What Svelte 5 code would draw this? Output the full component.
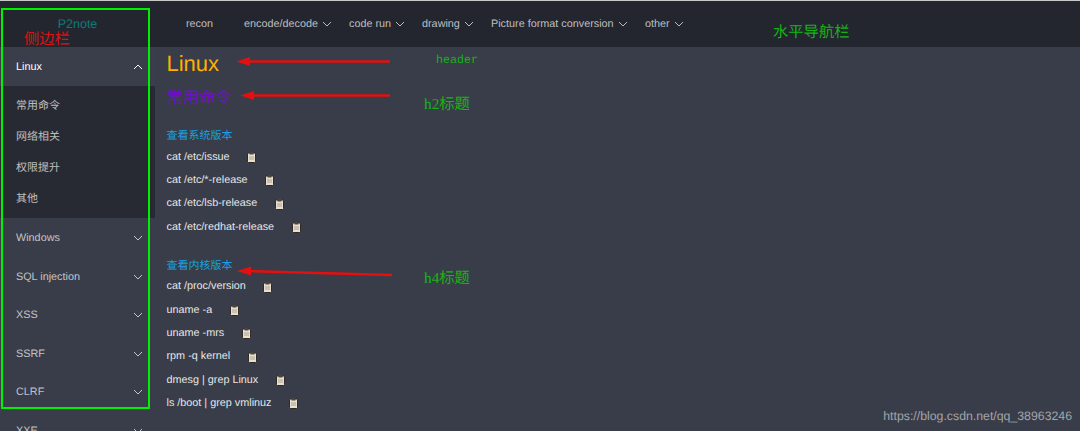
<script>
  const navItems = [
    { name: 'recon', width: 58, arrow: false },
    { name: 'encode/decode', width: 105, arrow: true },
    { name: 'code run', width: 73, arrow: true },
    { name: 'drawing', width: 69, arrow: true },
    { name: 'Picture format conversion', width: 154, arrow: true },
    { name: 'other', width: 60, arrow: true }
  ];
  const subItems = ['常用命令', '网络相关', '权限提升', '其他'];
  const closedItems = ['Windows', 'SQL injection', 'XSS', 'SSRF', 'CLRF', 'XXE'];
  const systemCmds = ['cat /etc/issue', 'cat /etc/*-release', 'cat /etc/lsb-release', 'cat /etc/redhat-release'];
  const kernelCmds = [
    'cat /proc/version',
    'uname -a',
    'uname -mrs',
    'rpm -q kernel',
    'dmesg | grep Linux',
    'ls /boot | grep vmlinuz'
  ];
</script>

{#snippet chevron(up)}
  <svg class="chevron" width="10" height="6" viewBox="0 0 10 6" class:up>
    <path d="M1 1 L5 5 L9 1" fill="none" stroke="currentColor" stroke-width="1" />
  </svg>
{/snippet}

{#snippet clip()}
  <svg class="clip" width="9" height="11" viewBox="0 0 9 11">
    <rect x="0.5" y="1" width="8" height="9.5" rx="1" fill="#e9dfcd" stroke="#2f2a26" />
    <rect x="2.5" y="0" width="4" height="2.5" fill="#4a443c" />
    <path d="M2 5h5M2 7h5" stroke="#a8a398" stroke-width="1" />
  </svg>
{/snippet}

{#snippet cmdList(cmds)}
  {#each cmds as cmd}
    <div class="cmd"><span>{cmd}</span><span class="clip-wrap">{@render clip()}</span></div>
  {/each}
{/snippet}

<div class="page">
  <header class="topbar">
    <div class="logo">P2note</div>
    <nav class="nav">
      {#each navItems as item}
        <div class="nav-item" style="width: {item.width}px">
          <span>{item.name}</span>
          {#if item.arrow}{@render chevron(false)}{/if}
        </div>
      {/each}
    </nav>
  </header>

  <div class="body">
    <aside class="sidebar">
      <div class="menu-title active">
        <span>Linux</span>
        {@render chevron(true)}
      </div>
      <div class="submenu">
        {#each subItems as sub}
          <div class="sub-item">{sub}</div>
        {/each}
      </div>
      {#each closedItems as item}
        <div class="menu-title">
          <span>{item}</span>
          {@render chevron(false)}
        </div>
      {/each}
    </aside>

    <main class="content">
      <h1>Linux</h1>
      <h2>常用命令</h2>
      <h4 class="first">查看系统版本</h4>
      {@render cmdList(systemCmds)}
      <h4 class="second">查看内核版本</h4>
      {@render cmdList(kernelCmds)}
    </main>
  </div>

  <!-- annotations drawn on top of the screenshot -->
  <div class="green-box"></div>
  <span class="note red side">侧边栏</span>
  <span class="note green nav-note">水平导航栏</span>
  <span class="note green header-note">header</span>
  <span class="note green h2-note">h2标题</span>
  <span class="note green h4-note">h4标题</span>
  <span class="watermark">https://blog.csdn.net/qq_38963246</span>

  <svg class="arrows" width="1080" height="431" viewBox="0 0 1080 431">
    <path d="M249 61.500 H390 M253 95.500 H390 M249 271 L392 275" stroke="#e60f0f" stroke-width="2.500" fill="none" />
    <path d="M236.500 61.500 L250 57 V66 Z M240.500 95.500 L254 91 V100 Z M237 271 L251 266.500 V275.500 Z" fill="#e60f0f" />
  </svg>
</div>

<style>
  :global(body) {
    margin: 0;
    background: #393d49;
  }

  .page {
    position: relative;
    width: 1080px;
    height: 431px;
    overflow: hidden;
    background: #393d49;
    font-family: 'Liberation Sans', 'Noto Sans CJK SC', sans-serif;
    font-size: 10.820px;
    text-rendering: geometricPrecision;
    color: #fff;
  }

  .topbar {
    display: flex;
    height: 46px;
    background: #23262f;
    border-top: 1px solid #c9c9c9;
    box-sizing: content-box;
  }

  .logo {
    width: 155px;
    padding-top: 15.500px;
    text-align: center;
    font-size: 12.500px;
    color: #0a7c78;
  }

  .nav {
    display: flex;
    padding-left: 31px;
    color: rgba(255, 255, 255, 0.7);
  }

  .nav-item {
    display: flex;
    align-items: center;
    gap: 4px;
    height: 46px;
  }

  .chevron {
    display: block;
  }

  .chevron.up {
    transform: rotate(180deg);
  }

  .body {
    display: flex;
  }

  .sidebar {
    flex: none;
    width: 155px;
    background: #393d49;
    color: rgba(255, 255, 255, 0.7);
  }

  .menu-title {
    display: flex;
    align-items: center;
    justify-content: space-between;
    box-sizing: border-box;
    height: 38.500px;
    padding: 1.500px 12px 0 16px;
  }

  .menu-title.active {
    height: 39px;
    padding-top: 0.500px;
    color: #fff;
    background: #3a3e4a;
  }

  .submenu {
    padding: 4.500px 0 3.500px;
    background: #282a33;
  }

  .sub-item {
    height: 31px;
    line-height: 31px;
    padding-left: 16px;
    font-size: 11px;
  }

  .content {
    flex: 1;
    padding-left: 11.500px;
  }

  h1 {
    margin: 2px 0 0;
    height: 30px;
    line-height: 30px;
    font-size: 22px;
    font-weight: 400;
    color: #ffb000;
  }

  h2 {
    margin: 5px 0 0;
    height: 28px;
    line-height: 28px;
    font-size: 16.250px;
    font-weight: 400;
    color: #7010c8;
  }

  h4 {
    margin: 0;
    height: 17px;
    line-height: 17px;
    font-size: 11px;
    font-weight: 400;
    color: #18a0e0;
  }

  h4.first {
    margin-top: 16px;
  }

  h4.second {
    margin-top: 19.500px;
  }

  .cmd {
    display: flex;
    align-items: center;
    height: 23.300px;
    color: #e6e6e6;
  }

  .clip-wrap {
    display: block;
    height: 11px;
    margin-top: 2px;
    margin-left: 17.500px;
  }

  .clip {
    display: block;
  }

  .green-box {
    position: absolute;
    left: 1px;
    top: 8px;
    width: 145px;
    height: 397px;
    border: 2px solid #00f000;
  }

  .note {
    position: absolute;
    font-family: 'Liberation Serif', 'Noto Sans CJK SC', serif;
    font-size: 15.300px;
    line-height: 18px;
    white-space: nowrap;
  }

  .red {
    color: #d81414;
  }

  .green {
    color: #14b414;
  }

  .side {
    left: 24px;
    top: 31px;
  }

  .nav-note {
    left: 773px;
    top: 24px;
  }

  .header-note {
    left: 436px;
    top: 51px;
    font-family: 'Liberation Mono', monospace;
    font-size: 11.700px;
  }

  .h2-note {
    left: 424px;
    top: 96px;
  }

  .h4-note {
    left: 424px;
    top: 270px;
  }

  .watermark {
    position: absolute;
    right: 8px;
    top: 408px;
    font-size: 12.300px;
    line-height: 16px;
    color: #a3a5aa;
  }

  .arrows {
    position: absolute;
    left: 0;
    top: 0;
  }
</style>
